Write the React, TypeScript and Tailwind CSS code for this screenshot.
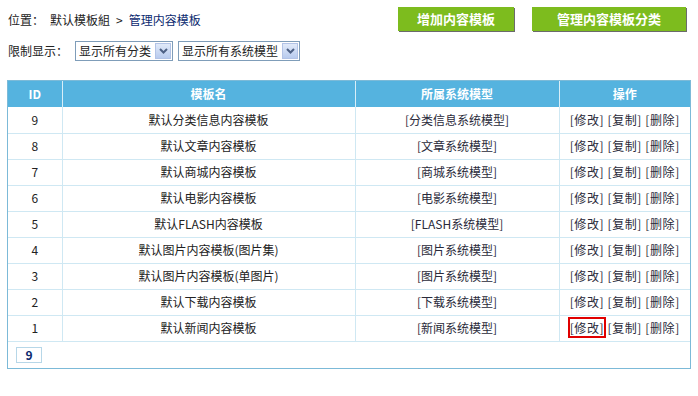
const rows = [
    { id: 9, name: "默认分类信息内容模板", model: "[分类信息系统模型]" },
    { id: 8, name: "默认文章内容模板", model: "[文章系统模型]" },
    { id: 7, name: "默认商城内容模板", model: "[商城系统模型]" },
    { id: 6, name: "默认电影内容模板", model: "[电影系统模型]" },
    { id: 5, name: "默认FLASH内容模板", model: "[FLASH系统模型]" },
    { id: 4, name: "默认图片内容模板(图片集)", model: "[图片系统模型]" },
    { id: 3, name: "默认图片内容模板(单图片)", model: "[图片系统模型]" },
    { id: 2, name: "默认下载内容模板", model: "[下载系统模型]" },
    { id: 1, name: "默认新闻内容模板", model: "[新闻系统模型]" },
];

const Select = ({ label, width }: { label: string; width: string }) => (
    <div className={`flex h-[20px] items-center justify-between border border-[#7f9db9] bg-white pl-[3px] pr-[1px] ${width}`}>
        <span>{label}</span>
        <span className="flex h-[16px] w-[16px] items-center justify-center border border-[#b2c3e6] bg-gradient-to-b from-[#e1eaf9] to-[#b8cbee]">
            <svg width="9" height="6" viewBox="0 0 9 6">
                <path d="M1 1 L4.5 4.5 L8 1" stroke="#4d6185" strokeWidth="2" fill="none" />
            </svg>
        </span>
    </div>
);

export default function App() {
    return (
        <div className="h-[396px] w-[698px] bg-white text-[12px] text-[#222] [font-family:'Noto_Sans_CJK_SC',sans-serif]">
            {/* top bar */}
            <div className="flex items-start pl-[8px] pt-[7px]">
                <div className="flex pt-[5px] leading-[16px]">
                    <span>位置：</span>
                    <span className="ml-[6px]">默认模板組</span>
                    <span className="mx-[6px]">&gt;</span>
                    <span className="text-[#0b2a6f]">管理内容模板</span>
                </div>
                <div className="ml-auto flex gap-[18px] pr-[12px]">
                    <button className="h-[24px] w-[116px] bg-[#7dbc1e] text-[13px] font-bold text-white shadow-[1px_1px_0_#6b6b6b]">
                        增加内容模板
                    </button>
                    <button className="h-[24px] w-[154px] bg-[#7dbc1e] text-[13px] font-bold text-white shadow-[1px_1px_0_#6b6b6b]">
                        管理内容模板分类
                    </button>
                </div>
            </div>

            {/* filter */}
            <div className="mt-[10px] flex items-center gap-[5px] pl-[8px]">
                <span className="mr-[2px]">限制显示：</span>
                <Select label="显示所有分类" width="w-[98px]" />
                <Select label="显示所有系统模型" width="w-[122px]" />
            </div>

            {/* table */}
            <div className="ml-[7px] mt-[19px] w-[684px] border border-[#7cbad8]">
                <table className="w-full border-collapse text-center">
                    <thead>
                        <tr className="h-[26px] bg-[#55b3df] font-bold text-white">
                            <th className="w-[54px] border-r border-[#d8eef8]">ID</th>
                            <th className="w-[293px] border-r border-[#d8eef8]">模板名</th>
                            <th className="w-[204px] border-r border-[#d8eef8]">所属系统模型</th>
                            <th>操作</th>
                        </tr>
                    </thead>
                    <tbody>
                        {rows.map((r) => (
                            <tr key={r.id} className="h-[26px] border-b border-[#cfe8f3]">
                                <td className="border-r border-[#cfe8f3]">{r.id}</td>
                                <td className="border-r border-[#cfe8f3]">{r.name}</td>
                                <td className="border-r border-[#cfe8f3] text-[#2a2a3a]">{r.model}</td>
                                <td className="tracking-[0.6px] text-[#2a2a3a]">
                                    <span className={r.id === 1 ? "outline outline-2 outline-[#e00000]" : ""}>[修改]</span>{" "}
                                    [复制] [删除]
                                </td>
                            </tr>
                        ))}
                    </tbody>
                </table>
                <div className="flex h-[26px] items-center pl-[8px]">
                    <span className="flex h-[16px] w-[26px] items-center justify-center border border-[#b7d7e8] font-bold text-[#0b2a6f]">
                        9
                    </span>
                </div>
            </div>
        </div>
    );
}
